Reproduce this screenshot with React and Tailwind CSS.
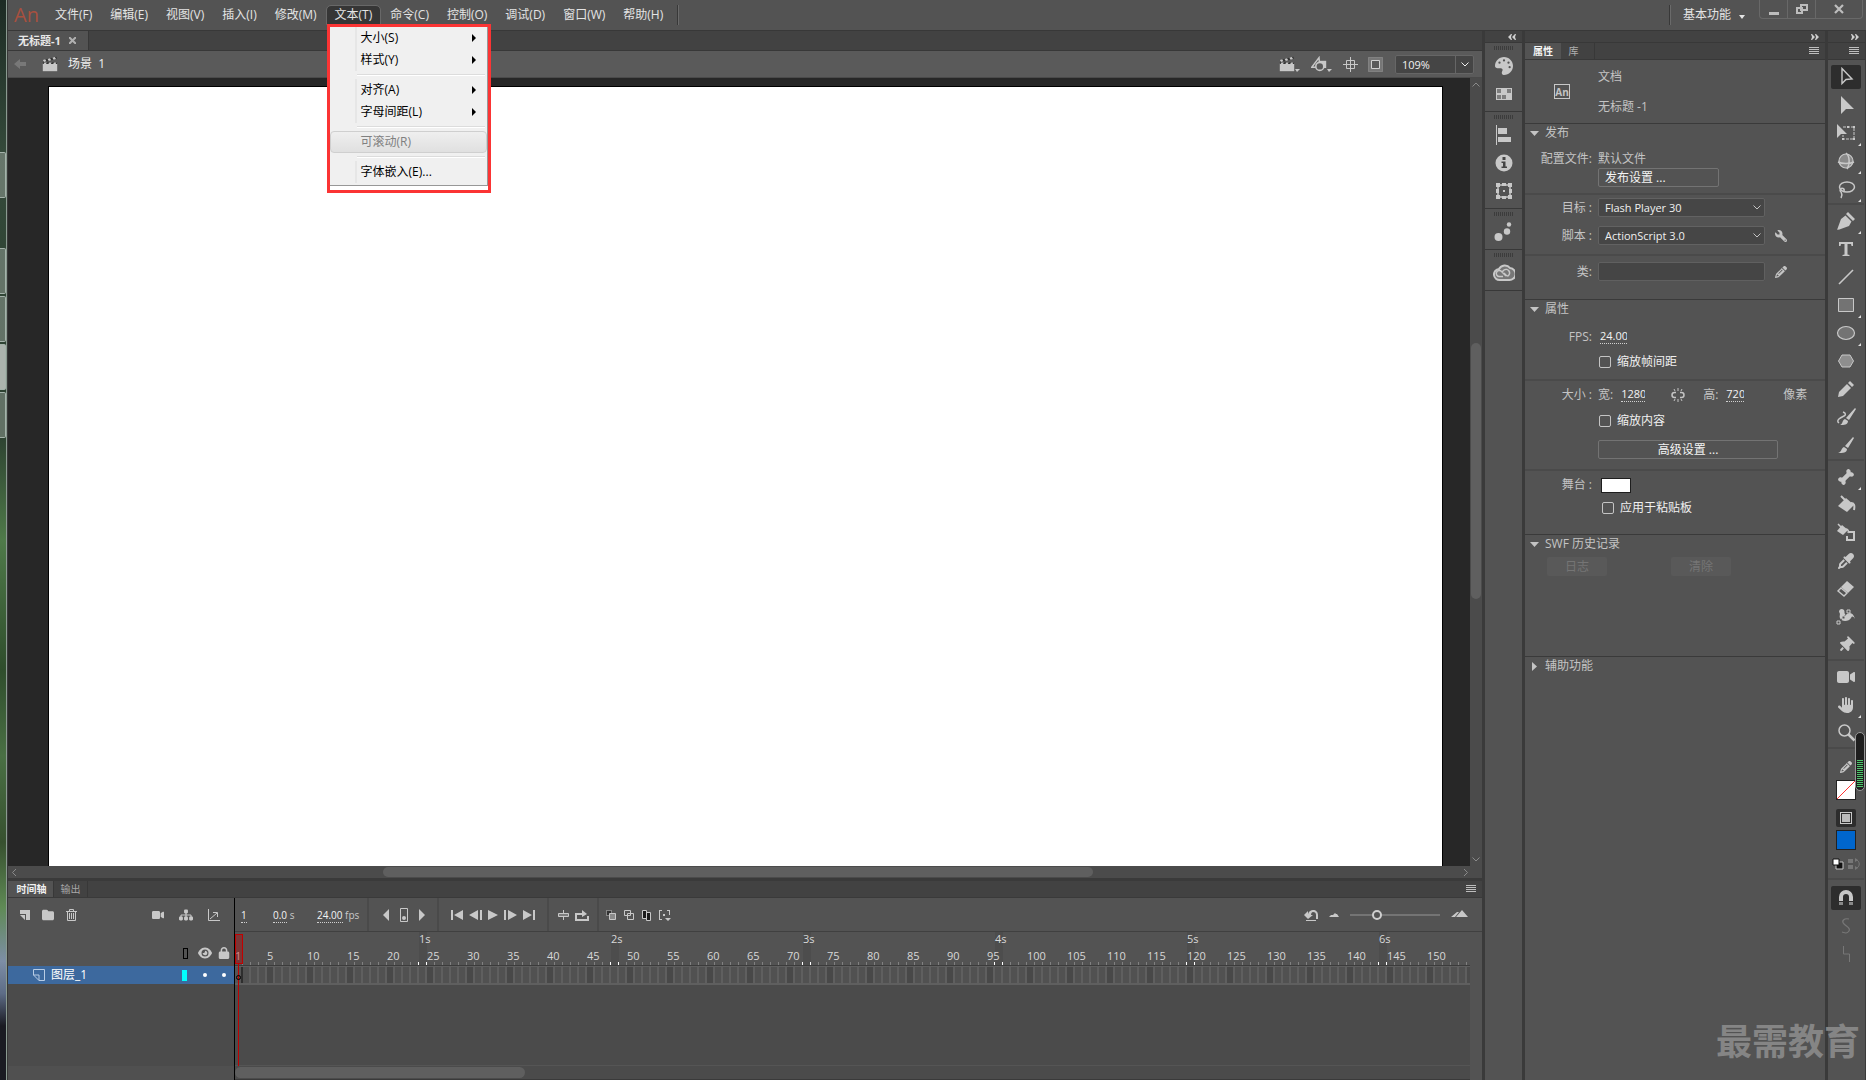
import { clsx } from 'clsx'
import {
  FaPalette, FaPenNib, FaPencil, FaPaintbrush, FaBone, FaFillDrip, FaEyeDropper, FaEraser,
  FaThumbtack, FaVideo, FaHand, FaWrench, FaEye, FaLock, FaFolder, FaSitemap,
} from 'react-icons/fa6'

const MENUS = ['文件(F)', '编辑(E)', '视图(V)', '插入(I)', '修改(M)', '文本(T)', '命令(C)', '控制(O)', '调试(D)', '窗口(W)', '帮助(H)']

const TEXT_MENU = [
  { label: '大小(S)', sub: true },
  { label: '样式(Y)', sub: true },
  null,
  { label: '对齐(A)', sub: true },
  { label: '字母间距(L)', sub: true },
  null,
  { label: '可滚动(R)', disabled: true },
  null,
  { label: '字体嵌入(E)...' },
]

const FPS = 24
const FRAMES = Array.from({ length: 154 }, (_, i) => i + 1)

// all hand drawn icons share a 20x20 grid, filled with the text colour
function Svg({ children, className = 'size-5' }) {
  return (
    <svg viewBox="0 0 20 20" fill="currentColor" className={clsx('block shrink-0', className)} aria-hidden="true">
      {children}
    </svg>
  )
}

function Burger() {
  return (
    <svg viewBox="0 0 10 8" className="block h-2 w-[10px] shrink-0" fill="#bdbdbd" aria-hidden="true">
      <path d="M0 0h10v1H0zM0 2h10v1H0zM0 4h10v1H0zM0 6h10v1H0z" />
    </svg>
  )
}

function Collapse({ left }) {
  return (
    <svg viewBox="0 0 8 6" className={clsx('block h-[6px] w-2 shrink-0', left && 'rotate-180')} fill="#cfcfcf" aria-hidden="true">
      <path d="M0 0h1l3 3-3 3H0l1-3zM4 0h1l3 3-3 3H4l1-3z" />
    </svg>
  )
}

function Chevron({ className }) {
  return (
    <svg viewBox="0 0 8 5" className={clsx('block h-[5px] w-2 shrink-0', className)} fill="none" stroke="currentColor" aria-hidden="true">
      <path d="M.5.5L4 4 7.500.5" />
    </svg>
  )
}

function Clapper() {
  return (
    <Svg className="size-4">
      <path d="M1 9h18v10H1z" />
      <path d="M1 5l17-4 .6 2.500-17 4.500z" fill="#333" />
      <path d="M1 5l3-.8 1.500 2.500-3 .8zM7 3.600l3-.8 1.500 2.500-3 .8zM13 2.200l3-.8 1.500 2.500-3 .8z" />
      <path d="M1 8h18v2H1z" fill="#333" />
      <path d="M3 8h3L5 10H2zM9 8h3l-1 2H8zM15 8h3l-1 2h-3z" />
    </Svg>
  )
}

/* ---------- menu bar ---------- */

function TextMenu() {
  return (
    <div className="absolute left-0 top-[18px] z-20 w-[164px] border-3 border-[#fb3434] bg-white pb-1">
      <ul role="menu" className="border-r border-b border-[#979797] bg-[#f0f0f0] pb-0.5 text-black">
        {TEXT_MENU.map((item, i) =>
          item ? (
            <li key={item.label} role="none" className={clsx(!item.disabled && 'bg-linear-to-r from-[#f0f0f0] from-[25px] via-[#dcdcdc] via-[26px] to-[#f0f0f0] to-[27px]')}>
              <button
                type="button"
                role="menuitem"
                disabled={item.disabled}
                className={clsx(
                  'flex h-[22px] w-full items-center justify-between pr-[11px] leading-4',
                  item.disabled ? 'rounded-sm border border-[#cfcfcf] bg-linear-to-b from-[#efefef] to-[#e0e0e0] pl-[30px] text-[#808080]' : 'pl-[31px]',
                )}
              >
                {item.label}
                {item.sub && (
                  <svg viewBox="0 0 4 8" className="h-2 w-1" aria-hidden="true">
                    <path d="M0 0l4 4-4 4z" />
                  </svg>
                )}
              </button>
            </li>
          ) : (
            <li key={i} role="separator" className="flex h-2 items-center pr-0.5 pl-[27px]">
              <span className="h-0.5 w-full border-b border-white bg-[#dcdcdc]" />
            </li>
          ),
        )}
      </ul>
    </div>
  )
}

function MenuBar() {
  return (
    <header className="flex h-[31px] shrink-0 items-center border-b border-[#383838] bg-[#535353] text-xs text-[#e4e4e4]">
      <span className="w-[39px] pl-1.5 text-xl text-[#a8503f]">An</span>
      <nav className="flex gap-0.5">
        {MENUS.map((m) => (
          <div key={m} className="relative">
            <button
              type="button"
              className={clsx('h-[18px] rounded-t-sm px-2 leading-4', m === '文本(T)' && 'bg-[#363636] outline outline-[#686868]')}
            >
              {m}
            </button>
            {m === '文本(T)' && <TextMenu />}
          </div>
        ))}
      </nav>
      <span className="ml-1.5 h-5 border-r border-l border-l-[#383838] border-r-[#6a6a6a]" />
      <span className="ml-auto h-5 border-r border-l border-l-[#383838] border-r-[#6a6a6a]" />
      <button type="button" className="flex items-center gap-2 pr-3.5 pl-3 leading-4">
        基本功能
        <svg viewBox="0 0 6 4" className="mt-1 h-1 w-[6px]" fill="currentColor" aria-hidden="true">
          <path d="M0 0h6L3 4z" />
        </svg>
      </button>
      <div className="mr-[3px] flex h-[19px] self-start rounded-b-sm border border-t-0 border-[#686868] text-[#bdbdbd]">
        <button type="button" aria-label="最小化" className="flex w-7 items-center justify-center border-r border-[#686868] pt-2">
          <span className="h-[3px] w-2.5 bg-[#bdbdbd]" />
        </button>
        <button type="button" aria-label="还原" className="flex w-7 items-center justify-center border-r border-[#686868]">
          <svg viewBox="0 0 12 10" className="h-2.5 w-3" fill="none" stroke="currentColor" strokeWidth="2" aria-hidden="true">
            <path d="M5 1h6v5H5zM1 4h5v5H1z" />
          </svg>
        </button>
        <button type="button" aria-label="关闭" className="flex w-[46px] items-center justify-center">
          <svg viewBox="0 0 10 10" className="size-2.5" stroke="currentColor" strokeWidth="2.200" aria-hidden="true">
            <path d="M1 1l8 8M9 1L1 9" />
          </svg>
        </button>
      </div>
    </header>
  )
}

/* ---------- document ---------- */

function EditBar() {
  return (
    <div className="flex h-[27px] shrink-0 items-center border-b border-[#4a4a4a] bg-[#5a5a5a] pr-2 pl-1.5 text-xs text-[#c8c8c8]">
      <button type="button" aria-label="返回" className="text-[#787878]">
        <svg viewBox="0 0 12 10" className="h-2.5 w-3" fill="currentColor" aria-hidden="true">
          <path d="M0 5l6-5v3h6v4H6v3z" />
        </svg>
      </button>
      <span className="ml-4"><Clapper /></span>
      <span className="ml-2.5 leading-4 text-[#f0f0f0]">场景&nbsp; 1</span>
      <div className="ml-auto flex items-center">
        <button type="button" aria-label="编辑场景" className="flex w-8 items-end">
          <Clapper />
          <svg viewBox="0 0 5 3" className="h-[3px] w-[5px]" fill="currentColor" aria-hidden="true"><path d="M0 0h5L2 3z" /></svg>
        </button>
        <button type="button" aria-label="编辑元件" className="flex w-8 items-end">
          <Svg className="size-4">
            <path d="M11 6h8v9h-8z" />
            <path d="M10 2L1 14h10z" fill="none" stroke="currentColor" strokeWidth="1.800" />
            <circle cx="11" cy="13" r="5" fill="#5a5a5a" stroke="currentColor" strokeWidth="2" />
          </Svg>
          <svg viewBox="0 0 5 3" className="h-[3px] w-[5px]" fill="currentColor" aria-hidden="true"><path d="M0 0h5L2 3z" /></svg>
        </button>
        <button type="button" aria-label="舞台居中" className="w-[25px]">
          <svg viewBox="0 0 15 15" className="size-[15px]" fill="none" stroke="currentColor" aria-hidden="true">
            <path d="M7.500 0v15M0 7.500h15M3.500 3.500h8v8h-8z" />
          </svg>
        </button>
        <button type="button" aria-label="剪切舞台外内容" className="w-[27px]">
          <svg viewBox="0 0 15 15" className="size-[15px]" aria-hidden="true">
            <path d="M.5.5h14v14H.5z" fill="#777" stroke="#9a9a9a" strokeDasharray="1 1" />
            <path d="M3.500 3.500h8v8h-8z" fill="#5a5a5a" stroke="#d0d0d0" />
          </svg>
        </button>
        <div className="flex h-[19px] w-[79px] items-center rounded-xs border border-[#666] bg-[#454545] text-[11px] text-[#f0f0f0]">
          <input aria-label="缩放" defaultValue="109%" className="h-full w-[60px] border-r border-[#666] pl-1.5 outline-none" />
          <button type="button" aria-label="缩放比例" className="flex flex-1 justify-center"><Chevron /></button>
        </div>
      </div>
    </div>
  )
}

function Document() {
  return (
    <section className="flex min-h-0 flex-1 flex-col">
      <div className="flex h-5 shrink-0 border-b border-[#383838] bg-[#424242]">
        <div className="flex w-[81px] items-center gap-2 border-r border-[#383838] bg-[#535353] pl-2.5 text-[11px] leading-4 font-bold text-[#e8e8e8]">
          无标题-1
          <button type="button" aria-label="关闭文档">
            <svg viewBox="0 0 7 7" className="size-[7px]" stroke="#b0b0b0" strokeWidth="2" aria-hidden="true"><path d="M0 0l7 7M7 0L0 7" /></svg>
          </button>
        </div>
      </div>
      <EditBar />
      <div className="flex min-h-0 flex-1 bg-[#272727]">
        <div className="mt-2 mr-[27px] ml-10 flex-1 border border-b-0 border-black bg-white" />
        <div className="flex w-3 flex-col items-center bg-[#4b4b4b] py-1 text-[#8a8a8a]">
          <Chevron className="rotate-180" />
          <div className="flex-[257]" />
          <div className="w-2.5 flex-[256] rounded-full bg-[#5f5f5f]" />
          <div className="flex-[259]" />
          <Chevron />
        </div>
      </div>
      <div className="flex h-3 shrink-0 items-center bg-[#4b4b4b] pr-3 pl-0.5 text-[#8a8a8a]">
        <Chevron className="rotate-90" />
        <div className="flex-[364]" />
        <div className="h-2.5 flex-[709] rounded-full bg-[#5f5f5f]" />
        <div className="flex-[368]" />
        <Chevron className="-rotate-90" />
      </div>
    </section>
  )
}

/* ---------- timeline ---------- */

function PlayBtn({ label, w, d }) {
  return (
    <button type="button" aria-label={label}>
      <svg viewBox={`0 0 ${w} 12`} width={w} height="12" className="block" fill="currentColor" aria-hidden="true">
        <path d={d} />
      </svg>
    </button>
  )
}

function Divider() {
  return <span className="h-full w-0.5 bg-[#4a4a4a]" />
}

const dotted = 'border-b border-dotted border-[#d0d0d0] text-[#f4f4f4]'

function TimelineControls() {
  return (
    <div className="flex h-[34px] shrink-0 items-center border-b border-[#404040] pr-3.5 text-[10px] leading-3 text-[#c8c8c8]">
      <span className="w-[38px] pl-1.5"><span className={dotted}>1</span></span>
      <span className="w-11"><span className={dotted}>0.0</span> s</span>
      <span className="w-[50px] whitespace-nowrap"><span className={dotted}>24.00</span> fps</span>
      <Divider />
      <div className="flex items-center gap-[11px] pr-3 pl-3.5">
        <PlayBtn label="上一关键帧" w={6} d="M6 0v12L0 6z" />
        <button type="button" aria-label="插入关键帧">
          <svg viewBox="0 0 8 14" className="block h-3.5 w-2" aria-hidden="true">
            <path d="M.5.5h7v13h-7z" fill="none" stroke="#c8c8c8" />
            <circle cx="4" cy="10" r="2" fill="#c8c8c8" />
          </svg>
        </button>
        <PlayBtn label="下一关键帧" w={6} d="M0 0v12l6-6z" />
      </div>
      <Divider />
      <div className="flex items-center gap-[6px] px-3">
        <PlayBtn label="转到第一帧" w={12} d="M0 1h2v10H0zM12 1v10L3 6z" />
        <PlayBtn label="后退一帧" w={13} d="M11 1h2v10h-2zM9 1v10L0 6z" />
        <PlayBtn label="播放" w={10} d="M0 1v10l10-5z" />
        <PlayBtn label="前进一帧" w={13} d="M0 1h2v10H0zM4 1v10l9-5z" />
        <PlayBtn label="转到最后一帧" w={12} d="M10 1h2v10h-2zM0 1v10l9-5z" />
      </div>
      <Divider />
      <div className="flex items-center gap-[6px] pr-2 pl-[9px]">
        <button type="button" aria-label="帧居中">
          <svg viewBox="0 0 11 12" className="block h-3 w-[11px]" aria-hidden="true">
            <path d="M5 1h1v10H5z" fill="#c8c8c8" />
            <path d="M.5 4.500h10v3H.5z" fill="#7d7d7d" stroke="#c8c8c8" />
          </svg>
        </button>
        <PlayBtn label="循环" w={14} d="M0 4h7V1l5 4-5 3V6H2v4h10V7h2v5H0z" />
      </div>
      <Divider />
      <div className="flex items-center gap-2 pl-[7px]">
        <button type="button" aria-label="绘图纸外观">
          <svg viewBox="0 0 10 12" className="block h-3 w-2.5" aria-hidden="true">
            <path d="M.5 1.500h5v5h-5z" fill="#333" stroke="#c8c8c8" strokeDasharray="1 1" />
            <path d="M3.500 4.500h6v6h-6z" fill="#8a8a8a" stroke="#c8c8c8" />
          </svg>
        </button>
        <button type="button" aria-label="绘图纸外观轮廓">
          <svg viewBox="0 0 10 12" className="block h-3 w-2.5" fill="#535353" stroke="#c8c8c8" aria-hidden="true">
            <path d="M.5 1.500h6v5h-6zM3.500 4.500h6v6h-6z" />
          </svg>
        </button>
        <button type="button" aria-label="编辑多个帧">
          <svg viewBox="0 0 9 12" className="block h-3 w-[9px]" fill="#1a1a1a" stroke="#c8c8c8" aria-hidden="true">
            <path d="M.5 1.500h4v8h-4zM4.500 3.500h4v8h-4z" />
          </svg>
        </button>
        <PlayBtn label="修改标记" w={12} d="M0 1h3v1H1v8h2v1H0zM8 1h3v5h-1V2H8zM4 5h2v2H4zM6 9h6l-3 3z" />
      </div>
      <div className="ml-auto flex items-center gap-[11px]">
        <PlayBtn label="重置缩放" w={14} d="M0 6l4-4v3C5 2 7 1 9 1c3 0 5 2 5 5v4h-2V6c0-2-1-3-3-3-1 0-2 1-2 3h2l-5 4zM2 11h10v1H2z" />
        <PlayBtn label="缩小" w={10} d="M0 8h10L8 5H7L6 4 4 6H2z" />
        <input
          type="range"
          aria-label="时间轴缩放"
          defaultValue="27"
          className="h-3 w-[90px] appearance-none bg-transparent [&::-webkit-slider-runnable-track]:h-0.5 [&::-webkit-slider-runnable-track]:bg-[#747474] [&::-webkit-slider-thumb]:-mt-1 [&::-webkit-slider-thumb]:size-2.5 [&::-webkit-slider-thumb]:appearance-none [&::-webkit-slider-thumb]:rounded-full [&::-webkit-slider-thumb]:border-2 [&::-webkit-slider-thumb]:border-[#cfcfcf] [&::-webkit-slider-thumb]:bg-[#535353]"
        />
        <PlayBtn label="放大" w={17} d="M0 8h4l4-5H6zM5 8h12l-6-7z" />
      </div>
    </div>
  )
}

function Layers() {
  return (
    <div className="flex w-[226px] shrink-0 flex-col bg-[#4b4b4b]">
      <div className="flex h-[68px] flex-col bg-[#535353] text-[#c8c8c8]">
        <div className="flex h-[34px] items-center gap-3 pr-3.5 pl-3">
          <button type="button" aria-label="新建图层">
            <svg viewBox="0 0 10 10" className="block size-2.5" fill="currentColor" aria-hidden="true"><path d="M0 0h10v10H6V4H0zM0 5l5 5V5z" /></svg>
          </button>
          <button type="button" aria-label="新建文件夹"><FaFolder className="size-3" /></button>
          <button type="button" aria-label="删除">
            <svg viewBox="0 0 11 12" className="block h-3 w-[11px]" fill="none" stroke="currentColor" aria-hidden="true">
              <path d="M0 2.500h11M3.500 2V.5h4V2M1.500 3v8.500h8V3M3.500 4v6M5.500 4v6M7.500 4v6" />
            </svg>
          </button>
          <div className="ml-auto flex items-center gap-[15px]">
            <button type="button" aria-label="添加摄像头"><FaVideo className="size-3" /></button>
            <button type="button" aria-label="显示父级视图"><FaSitemap className="size-3.5" /></button>
            <button type="button" aria-label="图层深度">
              <svg viewBox="0 0 12 12" className="block size-3" fill="none" stroke="currentColor" aria-hidden="true">
                <path d="M.5 0v11.500H12M2 10l7-6M5 3.500h4.500V8" />
              </svg>
            </button>
          </div>
        </div>
        <div className="flex h-[34px] items-center justify-end gap-1.5 pt-2 pr-1">
          <span className="mr-1 h-[11px] w-[5px] border border-black" />
          <FaEye className="size-3.5" />
          <FaLock className="size-3" />
        </div>
      </div>
      <div className="flex h-[18px] shrink-0 items-center bg-[#3d699e] pr-2 pl-[25px] text-white">
        <svg viewBox="0 0 12 12" className="size-3" fill="none" stroke="#b8cce4" aria-hidden="true"><path d="M.5 6V.5h11v11H6L.5 6H6v5.500" /></svg>
        <span className="ml-1.5 text-xs leading-4">图层_1</span>
        <span className="ml-auto h-[11px] w-[5px] bg-[#0ff]" />
        <span className="ml-4 size-1 rounded-full bg-white" />
        <span className="ml-[15px] size-1 rounded-full bg-white" />
      </div>
      <div className="flex-1" />
      <div className="h-3.5 bg-[#505050]" />
    </div>
  )
}

function Frames() {
  return (
    <div className="relative flex min-w-0 flex-1 flex-col overflow-hidden bg-[#4b4b4b]">
      <div className="flex h-[34px] shrink-0 border-b border-[#3c3c3c] bg-[#535353] text-[11px] leading-[14px] text-[#d8d8d8]">
        {FRAMES.map((f) => (
          <div key={f} className={clsx('flex w-2 shrink-0 flex-col', f % FPS === 0 && 'bg-[#4d4d4d]')}>
            <span className="relative h-[17px] whitespace-nowrap">{f % FPS === 0 && `${f / FPS}s`}</span>
            <span className="relative h-[13px] whitespace-nowrap">{(f === 1 || f % 5 === 0) && f}</span>
            <span className={clsx('h-[3px] w-px self-end', f % FPS === 0 || f % FPS === FPS - 1 ? 'bg-white' : 'bg-[#808080]')} />
          </div>
        ))}
      </div>
      <div className="flex h-[19px] shrink-0 border-t border-b-2 border-[#5f5f5f]">
        {FRAMES.map((f) => (
          <span
            key={f}
            className={clsx('w-2 shrink-0 border-r-2', f === 1 ? 'border-[#2e2e2e] bg-[#555]' : 'border-[#5f5f5f]', f > 1 && (f % 5 === 0 ? 'bg-[#484848]' : 'bg-[#515151]'))}
          />
        ))}
      </div>
      <div className="flex-1 border-b border-[#555]" />
      <div className="h-3.5 shrink-0 border-b border-[#3a3a3a] py-px">
        <div className="h-full w-[290px] rounded-full bg-[#5f5f5f]" />
      </div>
      {/* playhead */}
      <div className="absolute top-0.5 bottom-3.5 left-0 flex w-2 flex-col">
        <span className="h-[30px] w-full border border-[#c00000] bg-[#c00000]/35" />
        <span className="ml-[3px] w-px flex-1 bg-[#c00000]" />
      </div>
      <span className="absolute top-[43px] left-px size-[5px] rounded-full border border-black" />
    </div>
  )
}

function Timeline() {
  return (
    <section className="flex h-[202px] shrink-0 flex-col border-t-3 border-[#3a3a3a] bg-[#535353]">
      <div className="flex h-[17px] shrink-0 items-center border-b border-[#3a3a3a] bg-[#424242] pr-1.5 text-[10px] leading-3" role="tablist">
        <button type="button" role="tab" aria-selected="true" className="h-full w-[46px] border-r border-[#383838] bg-[#535353] pl-0.5 font-bold text-[#f0f0f0]">时间轴</button>
        <button type="button" role="tab" aria-selected="false" className="h-full w-[34px] border-r border-[#383838] text-[#a8a8a8]">输出</button>
        <button type="button" aria-label="面板菜单" className="ml-auto"><Burger /></button>
      </div>
      <div className="flex min-h-0 flex-1">
        <Layers />
        <div className="flex min-w-0 flex-1 flex-col border-l border-black">
          <TimelineControls />
          <div className="flex min-h-0 flex-1 pr-3"><Frames /></div>
        </div>
      </div>
    </section>
  )
}

/* ---------- collapsed panels ---------- */

const DOCK = [
  [
    ['颜色', <FaPalette className="size-[18px] -scale-x-100" />],
    ['样本', <Svg><path d="M2 4h16v12H2z" /><path d="M3 5h4v4H3zM13 5h4v4h-4zM3 11h4v4H3zM8 11h4v4H8z" fill="#7d7d7d" /></Svg>],
  ],
  [
    ['对齐', <Svg><path d="M2 0h1v20H2zM4 3h9v6H4zM4 12h13v5H4z" /></Svg>],
    ['信息', <Svg><circle cx="10" cy="10" r="8.500" /><path d="M8.500 4h3v3h-3zM7.500 8.500h4v5H13V15H7.500v-1.500H9V10H7.500z" fill="#444" /></Svg>],
    ['变形', <Svg><path d="M4 4h12v12H4z" fill="none" stroke="currentColor" strokeWidth="1.500" /><path d="M2 2h4v4H2zM8 2h4v3H8zM14 2h4v4h-4zM2 8h3v4H2zM15 8h3v4h-3zM2 14h4v4H2zM8 15h4v3H8zM14 14h4v4h-4zM9 9h2v2H9z" /></Svg>],
  ],
  [['动画预设', <Svg><circle cx="4.500" cy="15" r="4" /><circle cx="13" cy="9.500" r="3.200" /><circle cx="15" cy="2.500" r="2.200" /></Svg>]],
  [[
    'CC Libraries',
    <svg viewBox="0 0 22 18" className="h-[18px] w-[22px]" fill="none" stroke="currentColor" strokeWidth="2" aria-hidden="true">
      <path d="M7 16a5.500 5.500 0 0 1-1-11 6.500 6.500 0 0 1 11-1 6 6 0 0 1-1 12z" fill="#777" />
      <path d="M13 12L8.500 7.500a3 3 0 1 0-2 5H10M9 8l2-2a3.500 3.500 0 1 1 4 6c-2 0-2-1-4-3" strokeWidth="1.500" />
    </svg>,
  ]],
]

function Dock() {
  return (
    <aside className="flex w-[43px] shrink-0 flex-col border-r-3 border-l-3 border-[#3a3a3a] bg-[#535353]">
      <div className="flex h-3 items-center justify-center border-b border-[#383838] bg-[#424242] pl-4"><Collapse left /></div>
      {DOCK.map((group, i) => (
        <div key={i} className="flex flex-col items-center border-b border-[#383838] pt-[3px] pb-[3px] text-[#c8c8c8]">
          <span className="mb-0.5 h-1 w-5 bg-[repeating-linear-gradient(90deg,#3c3c3c_0_1px,transparent_1px_2px)]" />
          {group.map(([label, icon]) => (
            <button key={label} type="button" aria-label={label} className="flex h-7 w-7 items-center justify-center">{icon}</button>
          ))}
        </div>
      ))}
    </aside>
  )
}

/* ---------- properties ---------- */

function Section({ title, open = true, children, className }) {
  return (
    <section className={clsx('border-t border-[#3a3a3a]', className)}>
      <button type="button" className="flex h-[18px] items-center gap-1.5 pl-[5px] leading-4">
        <svg viewBox="0 0 9 9" className={clsx('size-[9px]', !open && '-rotate-90')} fill="currentColor" aria-hidden="true">
          <path d="M0 2h9L4.500 7z" />
        </svg>
        {title}
      </button>
      {children}
    </section>
  )
}

function Row({ label, id, className, children }) {
  return (
    <div className={clsx('flex items-center', className)}>
      <label htmlFor={id} className="w-[73px] shrink-0 pr-1.5 text-right leading-4">{label}</label>
      {children}
    </div>
  )
}

function Check({ label, className }) {
  return (
    <label className={clsx('flex items-center gap-1.5 leading-4 text-[#f0f0f0]', className)}>
      <input type="checkbox" className="size-3 appearance-none rounded-xs border border-[#c4c4c4]" />
      {label}
    </label>
  )
}

function Select({ id, value }) {
  return (
    <div className="relative w-[167px]">
      <select id={id} defaultValue={value} className="block h-[19px] w-full appearance-none rounded-xs border border-[#626262] bg-[#464646] pl-1.5 text-[11px] leading-4 text-[#f0f0f0]">
        <option>{value}</option>
      </select>
      <Chevron className="absolute top-[7px] right-1" />
    </div>
  )
}

function Num({ id, value, className }) {
  return (
    <input id={id} aria-label={id} defaultValue={value} className={clsx('h-3.5 border-b border-dotted border-[#d0d0d0] text-[11px] text-[#f4f4f4] outline-none', className)} />
  )
}

function Rule() {
  return <hr className="h-0.5 border-0 bg-[#4a4a4a]" />
}

const outlineBtn = 'h-[19px] rounded-xs border border-[#737373] leading-4 text-[#f4f4f4]'

function Properties() {
  return (
    <aside className="flex w-[303px] shrink-0 flex-col border-r-3 border-[#3a3a3a] bg-[#535353] text-xs text-[#c4c4c4]">
      <div className="flex h-3 shrink-0 items-center justify-end border-b border-[#383838] bg-[#424242] pr-1.5"><Collapse /></div>
      <div role="tablist" className="flex h-[17px] shrink-0 items-center border-b border-[#383838] bg-[#424242] pr-1.5 text-[10px] leading-3">
        <button type="button" role="tab" aria-selected="true" className="h-full w-9 bg-[#535353] font-bold text-[#f4f4f4]">属性</button>
        <button type="button" role="tab" aria-selected="false" className="h-full w-[34px] border-r border-[#383838] pr-2 text-[#b0b0b0]">库</button>
        <button type="button" aria-label="面板菜单" className="ml-auto"><Burger /></button>
      </div>
      <div className="flex h-[63px] shrink-0 items-center">
        <span className="ml-[29px] flex h-[15px] w-4 items-center justify-center border border-[#c8c8c8] text-[10px] leading-3 font-bold">An</span>
        <div className="ml-7 flex flex-col gap-3.5 leading-4">
          <span>文档</span>
          <span>无标题 -1</span>
        </div>
      </div>

      <Section title="发布">
        <Row label="配置文件:" className="mt-2 h-[18px]"><span className="leading-4">默认文件</span></Row>
        <button type="button" className={clsx(outlineBtn, 'ml-[73px] block w-[121px] pl-1.5 text-left')}>发布设置 ...</button>
        <div className="h-1.5" />
        <Rule />
        <Row label="目标 :" id="target" className="mt-[3px]"><Select id="target" value="Flash Player 30" /></Row>
        <Row label="脚本 :" id="script" className="mt-[9px]">
          <Select id="script" value="ActionScript 3.0" />
          <button type="button" aria-label="ActionScript 设置" className="ml-2.5"><FaWrench className="size-3 -scale-x-100" /></button>
        </Row>
        <div className="h-[9px]" />
        <Rule />
        <Row label="类:" id="class" className="mt-[6px] mb-[18px]">
          <input id="class" className="h-[19px] w-[167px] rounded-xs border border-[#606060] bg-[#454545] px-1.5 text-[#f0f0f0] outline-none" />
          <button type="button" aria-label="编辑类定义" className="ml-2.5"><FaPencil className="size-3" /></button>
        </Row>
      </Section>

      <Section title="属性">
        <Row label="FPS:" id="fps" className="mt-[11px] h-4"><Num id="fps" value="24.00" className="ml-0.5 w-[27px]" /></Row>
        <Check label="缩放帧间距" className="mt-[9px] ml-[74px]" />
        <div className="h-[9px]" />
        <Rule />
        <Row label="大小 :" className="mt-1.5 h-4">
          <label htmlFor="width">宽:</label>
          <Num id="width" value="1280" className="ml-2 w-6" />
          <button type="button" aria-label="链接宽高" className="ml-[26px]">
            <svg viewBox="0 0 14 14" className="block size-3.5" fill="none" stroke="currentColor" strokeWidth="1.500" aria-hidden="true">
              <path d="M5 4.500H3.500a2.500 2.500 0 0 0 0 5H5M9 4.500h1.500a2.500 2.500 0 0 1 0 5H9" />
              <path d="M7 0v3M3 1l1 2M11 1l-1 2M7 11v3M3 13l1-2M11 13l-1-2" strokeWidth="1" />
            </svg>
          </button>
          <label htmlFor="height" className="ml-[18px]">高:</label>
          <Num id="height" value="720" className="ml-2 w-[18px]" />
          <span className="ml-[39px]">像素</span>
        </Row>
        <Check label="缩放内容" className="mt-2.5 ml-[74px]" />
        <button type="button" className={clsx(outlineBtn, 'mt-[11px] ml-[73px] block w-[180px]')}>高级设置 ...</button>
        <div className="h-[10px]" />
        <Rule />
        <Row label="舞台 :" className="mt-1.5 h-4"><button type="button" aria-label="舞台颜色" className="ml-[3px] h-[15px] w-[30px] border border-[#1e1e1e] bg-white" /></Row>
        <Check label="应用于粘贴板" className="mt-[7px] mb-[18px] ml-[77px]" />
      </Section>

      <Section title="SWF 历史记录" className="h-[122px] shrink-0">
        <div className="mt-1 flex gap-16 pl-[22px]">
          <button type="button" disabled className="h-[19px] w-[60px] rounded-xs bg-[#595959] leading-4 text-[#757575]">日志</button>
          <button type="button" disabled className="h-[19px] w-[60px] rounded-xs bg-[#595959] leading-4 text-[#757575]">清除</button>
        </div>
      </Section>
      <Section title="辅助功能" open={false} />
    </aside>
  )
}

/* ---------- tools ---------- */

const TOOL_GROUPS = [
  [
    ['选择工具', <Svg><path d="M6 1.500v15l4-4 6-.5z" fill="none" stroke="currentColor" strokeWidth="1.400" /></Svg>, false, true],
    ['部分选取工具', <Svg><path d="M5 1v18l5-5h8z" /></Svg>],
    ['任意变形工具', <Svg><path d="M1 1v14l4-4h6z" /><path d="M7 4h11v12H7v-4" fill="none" stroke="currentColor" strokeDasharray="3 1" /><path d="M17 3h2v2h-2zM17 15h2v2h-2zM6 15h2v2H6zM11 3h2v2h-2z" /></Svg>, true],
    ['3D 旋转工具', <Svg><circle cx="10" cy="10" r="7" fill="#8a8a8a" stroke="currentColor" strokeWidth="1.200" /><path d="M2 11c4 2 12 2 16 0M10 2c4 3 4 12 1 16" fill="none" stroke="currentColor" strokeWidth="1.500" /></Svg>, true],
    ['套索工具', <Svg><ellipse cx="11" cy="8" rx="7.500" ry="5" fill="none" stroke="currentColor" strokeWidth="1.500" /><path d="M8 12a2 2 0 1 0-3 1c1 2 2 3 0 6" fill="none" stroke="currentColor" strokeWidth="1.500" /></Svg>, true],
  ],
  [
    ['钢笔工具', <Svg><path d="M12 1l7 7-2 2-7-7zM9.500 4.500l6 6L13 15 2 19l5-6a1.600 1.600 0 1 1 1 1l-5 4-2 1L5 8z" /></Svg>, true],
    ['文本工具', <Svg><path d="M3 3h14v4h-1.500l-.5-2h-3.500v10.500l2 .5v1h-7v-1l2-.5V5H5l-.5 2H3z" /></Svg>],
    ['线条工具', <Svg><path d="M3 17L17 3" stroke="currentColor" strokeWidth="1.600" /></Svg>],
    ['矩形工具', <Svg><path d="M2.500 3.500h15v13h-15z" fill="#737373" stroke="currentColor" /></Svg>, true],
    ['椭圆工具', <Svg><ellipse cx="10" cy="10" rx="8.500" ry="6.500" fill="#737373" stroke="currentColor" strokeWidth="1.200" /></Svg>, true],
    ['多角星形工具', <Svg><path d="M6 4h8l3.500 6-3.500 6H6l-3.500-6z" fill="#8e8e8e" stroke="currentColor" /></Svg>],
    ['铅笔工具', <Svg><path d="M14 2l4 4-2 2-4-4zM11 5l4 4-8 8-5 1 1-5z" /></Svg>],
    ['画笔工具', <Svg><path d="M19 1l1 1-7 11-3-2zM9 12l3 2c0 4-4 4-8 4 3-1 2-5 5-6z" /><path d="M3 16c-4-3 3-6 5-7s2-3-1-4" fill="none" stroke="currentColor" strokeWidth="1.500" /></Svg>],
    ['传统画笔工具', <Svg><path d="M17 2l1 1-6 10-3-2zM8 12l3 2c0 4-4 4-9 4 4-1 3-5 6-6z" /></Svg>],
  ],
  [
    ['骨骼工具', <FaBone className="size-4 -rotate-45" />, true],
    ['颜料桶工具', <Svg><path d="M10 3l8 7-7 7-9-6z" /><path d="M5 1l7 7M15 8c3 0 4 2 3 7" fill="none" stroke="currentColor" strokeWidth="2" /></Svg>],
    ['墨水瓶工具', <Svg><path d="M6 2l6 5-5 5-6-4z" /><path d="M2 1l5 5M10 6c2 0 3 2 2 4" fill="none" stroke="currentColor" strokeWidth="1.500" /><path d="M13 9h5v8h-7v-4" fill="none" stroke="currentColor" strokeWidth="2" /></Svg>],
    ['滴管工具', <FaEyeDropper className="size-4" />],
    ['橡皮擦工具', <Svg><path d="M11 2l7 6-6 6-7-6z" /><path d="M5 9l6 5-3 3-6-5z" fill="none" stroke="currentColor" strokeWidth="1.400" /></Svg>],
    ['宽度工具', <Svg><path d="M3 5c0-3 3-4 5-2 1 2 0 3 1 4 2 1 3-1 5-1s4 2 5 6c-2-3-3-3-4-1-2 4-10 4-11 0-1-2 1-4-1-6z" /><path d="M2 16L13 4" stroke="#535353" /><path d="M1 14h3v3H1zM11 3h3v3h-3zM6 9h3v3H6z" fill="#535353" stroke="currentColor" /></Svg>],
    ['资源变形工具', <FaThumbtack className="size-4 rotate-45" />],
  ],
  [
    ['摄像头', <FaVideo className="size-[18px]" />],
    ['手形工具', <FaHand className="size-4" />, true],
    ['缩放工具', <Svg><circle cx="8.500" cy="7.500" r="5.500" fill="none" stroke="currentColor" strokeWidth="1.500" /><path d="M12.500 11.500l6 6" stroke="currentColor" strokeWidth="2.500" /></Svg>],
  ],
]

function ToolBar() {
  return (
    <aside className="flex w-[38px] shrink-0 flex-col border-r border-[#3a3a3a] bg-[#535353] text-[#c8c8c8]">
      <div className="flex h-3 shrink-0 items-center justify-end border-b border-[#383838] bg-[#424242] pr-1.5"><Collapse /></div>
      <div className="flex h-[17px] shrink-0 items-center justify-end border-b border-[#383838] bg-[#424242] pr-1.5"><Burger /></div>
      <div className="flex flex-col items-center pt-[5px] pr-px">
        {TOOL_GROUPS.map((tools, i) => (
          <div key={i} className="mb-1 flex w-full flex-col items-center gap-1 border-b-2 border-[#4a4a4a] pb-0.5">
            {tools.map(([label, icon, more, active]) => (
              <button
                key={label}
                type="button"
                aria-label={label}
                className={clsx('relative flex h-6 w-[30px] items-center justify-center rounded-xs', active && 'bg-[#2d2d2d]')}
              >
                {icon}
                {more && (
                  <svg viewBox="0 0 3 3" className="absolute right-0 -bottom-px size-[3px]" fill="#e0e0e0" aria-hidden="true"><path d="M3 0v3H0z" /></svg>
                )}
              </button>
            ))}
          </div>
        ))}
        <FaPencil className="mt-2 size-3" />
        <button type="button" aria-label="笔触颜色" className="mt-[7px] size-5 border border-[#222] bg-white">
          <svg viewBox="0 0 18 18" className="block size-full" aria-hidden="true"><path d="M0 18L18 0" stroke="#f33" /></svg>
        </button>
        <div className="mt-[9px] flex h-[18px] w-5 items-center justify-center rounded-xs bg-[#2d2d2d]">
          <span className="size-3 border border-[#c8c8c8] p-px"><span className="block size-full bg-[#bbb]" /></span>
        </div>
        <button type="button" aria-label="填充颜色" className="mt-[3px] size-5 border border-[#222] bg-[#0066cc]" />
        <div className="mt-2 flex gap-1">
          <svg viewBox="0 0 12 12" className="size-3" aria-hidden="true">
            <path d="M4 4h7v7H4z" fill="#111" stroke="#c8c8c8" />
            <path d="M1 1h6v6H1z" fill="#fff" stroke="#111" />
          </svg>
          <svg viewBox="0 0 12 12" className="size-3" fill="#777" aria-hidden="true">
            <path d="M0 1h5v4H0zM0 7h5v4H0zM7 0l3 2-3 2zM7 8l3 2-3 2z" />
            <path d="M9 2c3 2 3 6 0 8" fill="none" stroke="#777" />
          </svg>
        </div>
        <div className="mt-2 mb-1.5 h-0.5 w-full bg-[#4a4a4a]" />
        <button type="button" aria-label="贴紧至对象" className="flex h-6 w-[30px] items-center justify-center rounded-xs bg-[#2d2d2d]">
          <Svg><path d="M3 13V9a7 7 0 0 1 14 0v4h-4V9a3 3 0 0 0-6 0v4z" /><path d="M3 14h4v3H3zM13 14h4v3h-4z" fill="#888" /></Svg>
        </button>
        <button type="button" aria-label="平滑" className="mt-1 flex h-6 items-center text-[#777]">
          <Svg><path d="M13 3C8 2 5 5 8 8s7 4 5 7-4 2-7 1" fill="none" stroke="currentColor" strokeWidth="1.200" /></Svg>
        </button>
        <button type="button" aria-label="伸直" className="mt-1 flex h-6 items-center text-[#777]">
          <Svg><path d="M7.500 2v8h6v8" fill="none" stroke="currentColor" /></Svg>
        </button>
      </div>
    </aside>
  )
}

const tile = 'h-[46px] rounded-r-xs border border-l-0 border-[#a4b2aa]'

export default function App() {
  return (
    <div className="relative flex h-screen min-h-[1000px] overflow-hidden bg-[#535353] font-['Open_Sans','Noto_Sans_CJK_SC',sans-serif]">
      {/* sliver of desktop left of the window */}
      <div className="flex w-[7px] shrink-0 flex-col border-r border-[#8a9a90] bg-[linear-gradient(#1d2b24,#34493a_14%,#2c4030_40%,#4f7a49_50%,#2f4d2c_62%,#4a7044_70%,#37502f_78%,#5f8a55_84%,#7d8ea6_89%,#5d6c86_92%,#1a1b22_95%)]">
        <div className="h-[152px]" />
        <div className={clsx(tile, 'bg-white/25')} />
        <div className={clsx(tile, 'mt-[50px] bg-white/25')} />
        <div className={clsx(tile, 'mt-0.5 bg-white/25')} />
        <div className={clsx(tile, 'mt-0.5 bg-white/60')} />
        <div className={clsx(tile, 'mt-0.5 bg-white/25')} />
      </div>
      <main className="flex min-w-0 flex-1 flex-col border-l border-[#383838]">
        <MenuBar />
        <div className="flex min-h-0 flex-1">
          <div className="flex min-w-0 flex-1 flex-col">
            <Document />
            <Timeline />
          </div>
          <Dock />
          <Properties />
          <ToolBar />
        </div>
      </main>

      {/* level meter floating at the screen edge */}
      <div className="absolute top-[732px] right-px z-10 flex h-[59px] w-2.5 flex-col justify-end rounded-md border border-[#999] bg-[#1e1e1e] px-px pb-0.5">
        <span className="h-7 bg-[repeating-linear-gradient(#4cc76a_0_1px,#1e1e1e_1px_2px)]" />
      </div>
      <span className="absolute right-1.5 bottom-3 z-10 text-4xl leading-[52px] font-bold text-[#858585]">最需教育</span>
    </div>
  )
}
